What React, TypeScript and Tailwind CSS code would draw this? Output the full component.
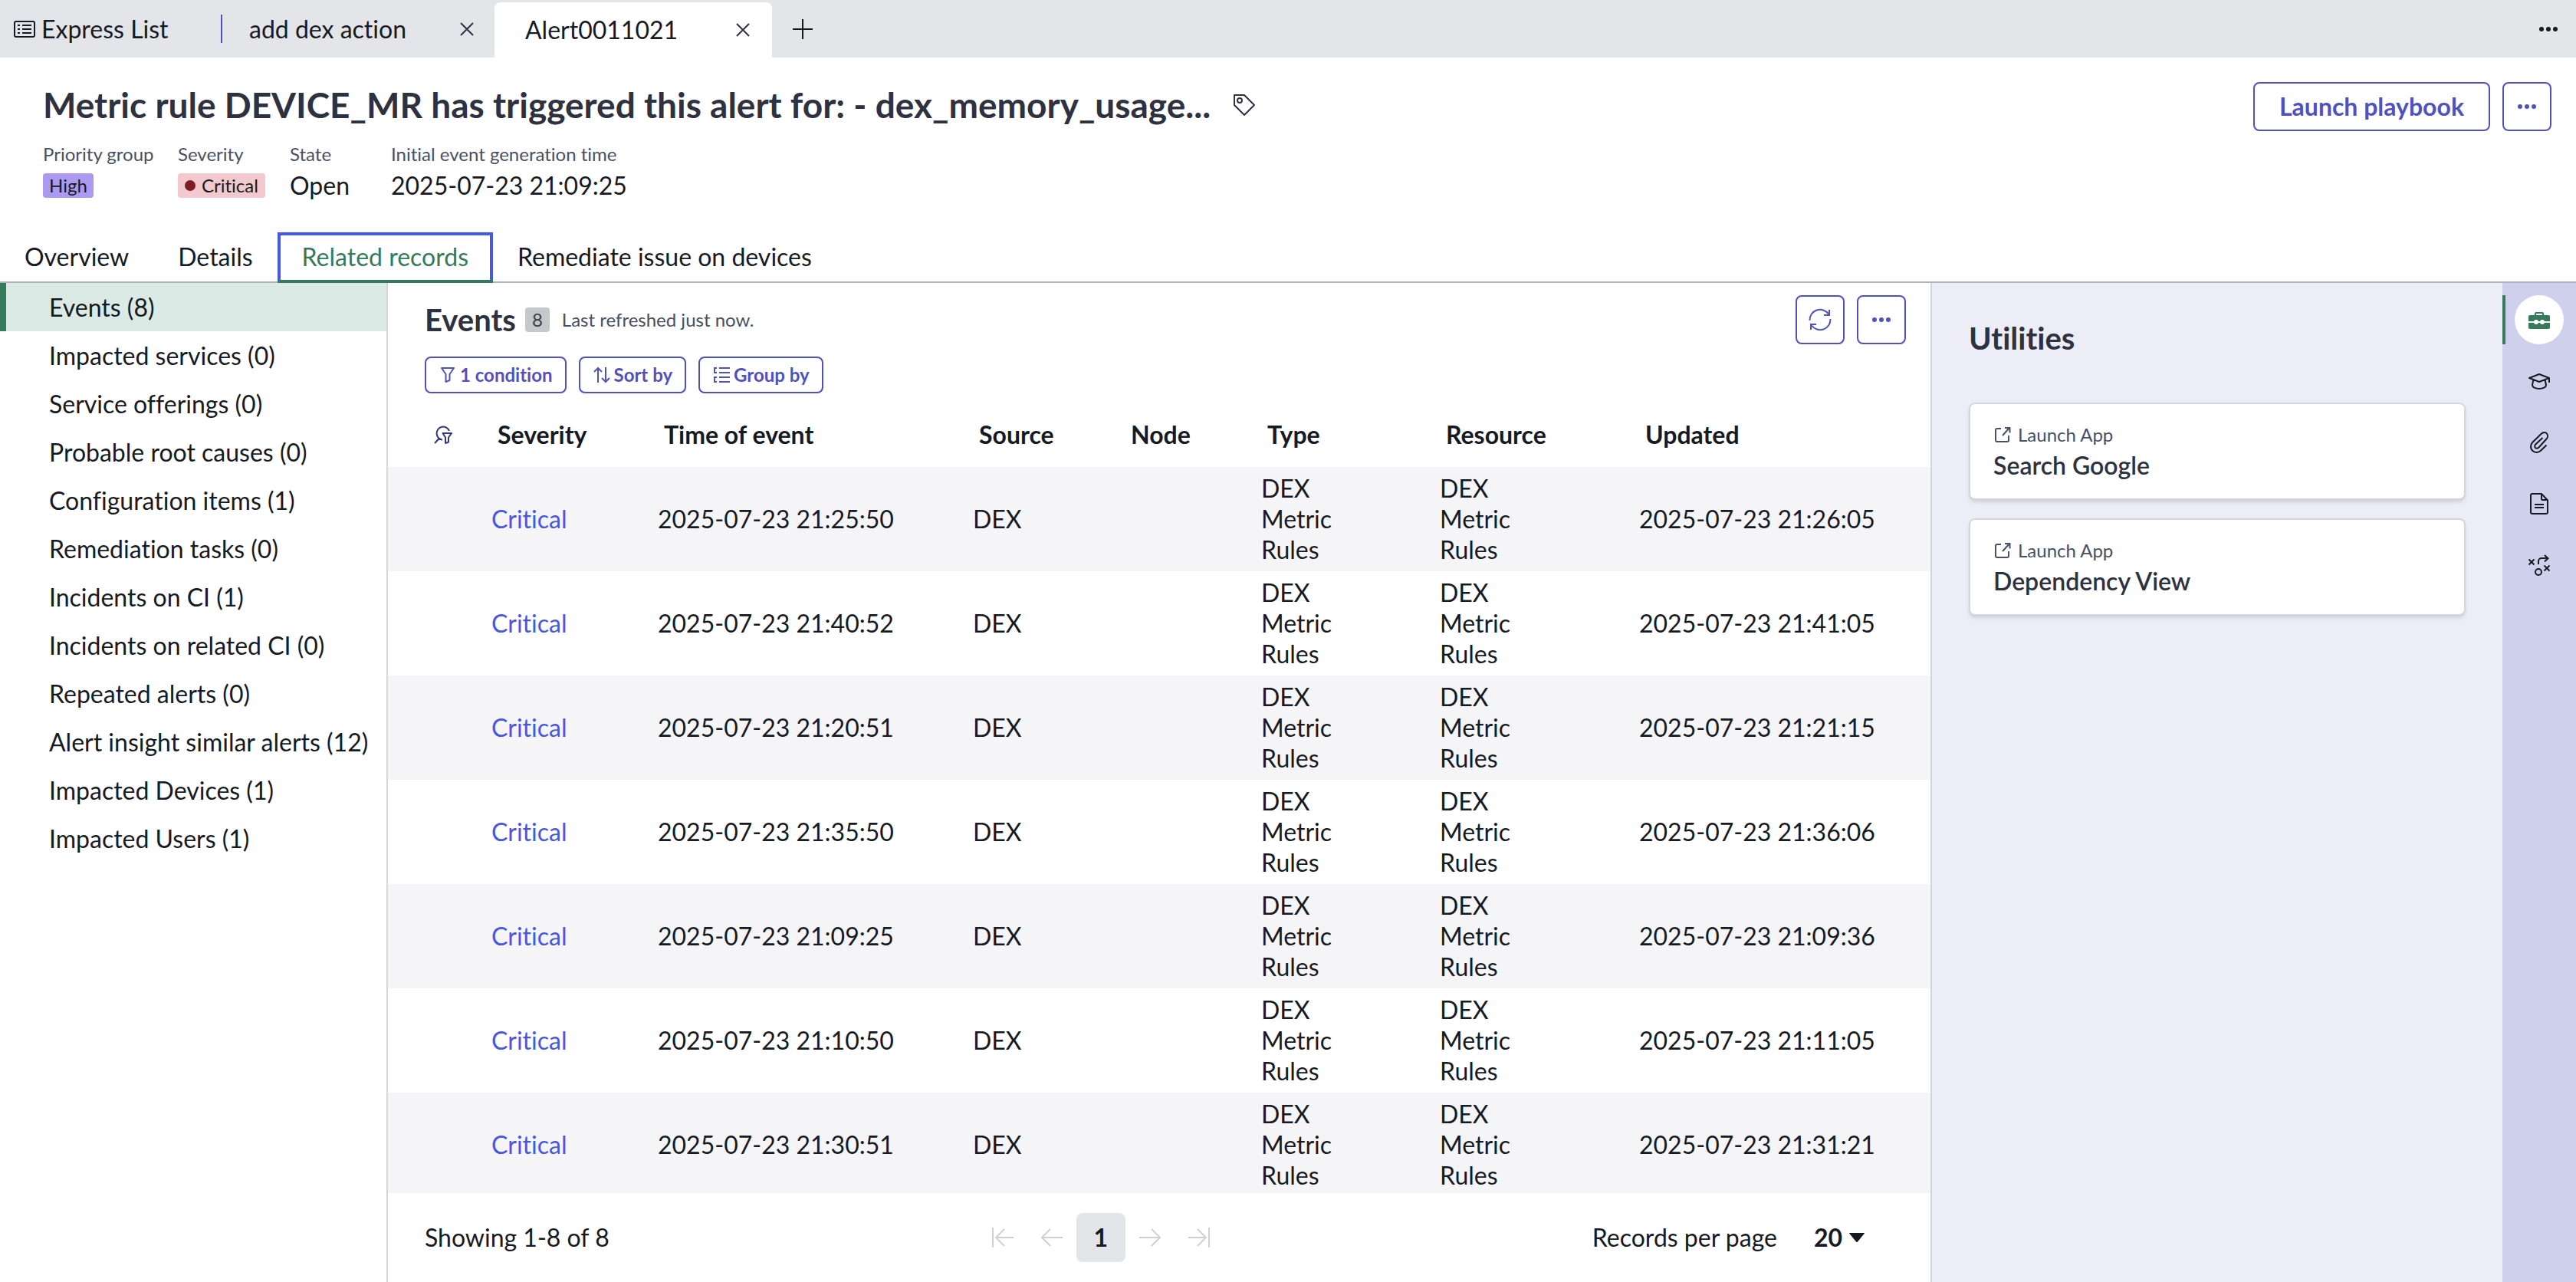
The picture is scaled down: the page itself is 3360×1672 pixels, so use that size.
import React from "react";

type IconProps = { className?: string; children?: React.ReactNode; box?: string; sw?: number };

function Svg({ className = "size-8", children, box = "0 0 32 32", sw = 2 }: IconProps) {
  return (
    <svg className={"shrink-0 " + className} viewBox={box} fill="none" stroke="currentColor" strokeWidth={sw} aria-hidden="true">
      {children}
    </svg>
  );
}

const Dots = () => (
  <Svg>
    <g fill="currentColor" stroke="none">
      <circle cx="7" cy="16" r="3" />
      <circle cx="16" cy="16" r="3" />
      <circle cx="25" cy="16" r="3" />
    </g>
  </Svg>
);

const Close = () => (
  <Svg>
    <path d="M8 8l16 16M24 8L8 24" />
  </Svg>
);

const ListIcon = () => (
  <Svg className="size-7" box="0 0 28 28">
    <rect x="1" y="4" width="26" height="20" rx="2" />
    <path d="M5 9h3M5 14h3M5 19h3M11 9h12M11 14h12M11 19h12" />
  </Svg>
);

const TagIcon = () => (
  <Svg>
    <path d="M3 3h13l13 13L16 29 3 16z" strokeLinejoin="round" />
    <circle cx="10" cy="10" r="3" />
  </Svg>
);

const LaunchIcon = () => (
  <Svg className="size-6" box="0 0 24 24">
    <path d="M10 4H5a2 2 0 0 0-2 2v13a2 2 0 0 0 2 2h13a2 2 0 0 0 2-2v-6M15 3h6.500v6.500M21 3l-9 10" />
  </Svg>
);

const sideItems = [
  "Events (8)",
  "Impacted services (0)",
  "Service offerings (0)",
  "Probable root causes (0)",
  "Configuration items (1)",
  "Remediation tasks (0)",
  "Incidents on CI (1)",
  "Incidents on related CI (0)",
  "Repeated alerts (0)",
  "Alert insight similar alerts (12)",
  "Impacted Devices (1)",
  "Impacted Users (1)",
];

const rows = [
  ["2025-07-23 21:25:50", "2025-07-23 21:26:05"],
  ["2025-07-23 21:40:52", "2025-07-23 21:41:05"],
  ["2025-07-23 21:20:51", "2025-07-23 21:21:15"],
  ["2025-07-23 21:35:50", "2025-07-23 21:36:06"],
  ["2025-07-23 21:09:25", "2025-07-23 21:09:36"],
  ["2025-07-23 21:10:50", "2025-07-23 21:11:05"],
  ["2025-07-23 21:30:51", "2025-07-23 21:31:21"],
];

function TopBar() {
  return (
    <div className="flex h-[75px] shrink-0 items-stretch bg-[#e4e5e9]">
      <button className="flex w-72 items-center gap-2 pl-[18px]">
        <ListIcon />
        <span>Express List</span>
      </button>
      <div className="my-[19px] w-[2px] bg-[#4f52bd]" />
      <div className="flex w-[355px] items-center justify-between pr-5 pl-[35px]">
        <button>add dex action</button>
        <button aria-label="Close add dex action" className="text-[#2e3240]"><Close /></button>
      </div>
      <div className="mt-[3px] flex w-[362px] items-center justify-between rounded-t-lg bg-white pr-[22px] pl-10">
        <button>Alert0011021</button>
        <button aria-label="Close Alert0011021" className="text-[#2e3240]"><Close /></button>
      </div>
      <button aria-label="Add tab" className="ml-6">
        <Svg><path d="M3 16h26M16 3v26" /></Svg>
      </button>
      <button aria-label="More tabs" className="mr-5 ml-auto"><Dots /></button>
    </div>
  );
}

function Field({ label, children, className }: { label: string; children: React.ReactNode; className: string }) {
  return (
    <div className={className}>
      <dt className="text-2xl whitespace-nowrap text-[#485063]">{label}</dt>
      <dd className="flex h-[50px] items-center">{children}</dd>
    </div>
  );
}

function Header() {
  return (
    <header className="flex shrink-0 items-start justify-between pt-8 pr-8 pl-14">
      <div>
        <div className="flex h-[60px] items-center gap-7">
          <h1 className="text-[46px] font-bold text-[#2e3240]">
            Metric rule DEVICE_MR has triggered this alert for: - dex_memory_usage...
          </h1>
          <button aria-label="Tags" className="text-[#2e3240]"><TagIcon /></button>
        </div>
        <dl className="mt-[18px] flex gap-8">
          <Field label="Priority group" className="w-36">
            <span className="rounded bg-[#ab9af0] px-2 text-2xl">High</span>
          </Field>
          <Field label="Severity" className="w-[114px]">
            <span className="flex items-center gap-2 rounded bg-[#f1c9ce] px-[9px] text-2xl">
              <span className="size-3.5 rounded-full bg-[#7d1d26]" />
              Critical
            </span>
          </Field>
          <Field label="State" className="w-[100px]">Open</Field>
          <Field label="Initial event generation time" className="w-80">2025-07-23 21:09:25</Field>
        </dl>
      </div>
      <div className="flex gap-4 text-[#4f52bd]">
        <button className="h-16 rounded-lg border-2 border-current px-8 text-[32px] font-bold">Launch playbook</button>
        <button aria-label="More actions" className="flex size-16 items-center justify-center rounded-lg border-2 border-current">
          <Dots />
        </button>
      </div>
    </header>
  );
}

function Tabs() {
  return (
    <nav className="mt-auto flex h-[66px] shrink-0 border-b-2 border-[#b0b1c1]">
      <button className="px-8">Overview</button>
      <button className="px-8">Details</button>
      <button className="relative -mb-0.5 border-4 border-[#4558e4] px-7 pb-0.5 text-[#357a5a] after:absolute after:inset-x-[-4px] after:-bottom-1 after:h-1 after:bg-[#357a5a]">
        Related records
      </button>
      <button className="px-8">Remediate issue on devices</button>
    </nav>
  );
}

function Sidebar() {
  return (
    <ul className="w-[506px] shrink-0 border-r-2 border-[#d3d4dc]">
      {sideItems.map((t, i) => (
        <li key={t}>
          <button
            className={
              i === 0
                ? "h-[63px] w-full border-l-8 border-[#357a5a] bg-[#dbeae4] pl-14 text-left"
                : "h-[63px] w-full pl-16 text-left"
            }
          >
            {t}
          </button>
        </li>
      ))}
    </ul>
  );
}

const chip = "flex h-12 items-center gap-1 rounded-lg border-2 border-current px-4 text-2xl font-bold";

function Records() {
  return (
    <main className="flex min-w-0 flex-1 flex-col">
      <div className="flex items-center pt-4 pr-8 pl-12">
        <h2 className="text-[40px] leading-[48px] font-bold text-[#2e3240]">Events</h2>
        <span className="ml-3 rounded bg-[#c5c9c9] px-[9px] text-2xl text-[#3c3f48]">8</span>
        <span className="ml-4 text-2xl text-[#485063]">Last refreshed just now.</span>
        <div className="ml-auto flex gap-4 text-[#4f52bd]">
          <button aria-label="Refresh" className="flex size-16 items-center justify-center rounded-lg border-2 border-current">
            <Svg>
              <path d="M2.500 17A13.500 13.500 0 0 1 27 8.500M29.500 15A13.500 13.500 0 0 1 5 23.500M28 3v7h-7M4 29v-7h7" />
            </Svg>
          </button>
          <button aria-label="More list actions" className="flex size-16 items-center justify-center rounded-lg border-2 border-current">
            <Dots />
          </button>
        </div>
      </div>
      <div className="mt-4 flex gap-4 pl-12 text-[#4f52bd]">
        <button className={chip}>
          <Svg className="size-6" box="0 0 24 24"><path d="M4 3h16l-5.500 8v8l-5 2V11z" strokeLinejoin="round" /></Svg>
          1 condition
        </button>
        <button className={chip}>
          <Svg className="size-6" box="0 0 24 24"><path d="M7 22V3M2 8l5-5 5 5M17 2v19M12 16l5 5 5-5" /></Svg>
          Sort by
        </button>
        <button className={chip}>
          <Svg className="size-6" box="0 0 24 24"><path d="M9 3h14M9 9h14M9 15h14M9 21h14M6 3H3v6h3M6 15H3v6h3" /></Svg>
          Group by
        </button>
      </div>
      <div className="mt-3 h-0 min-h-0 flex-1 overflow-hidden">
        <table className="w-full table-fixed border-collapse text-left">
          <colgroup>
            <col className="w-[127px]" />
            <col className="w-[217px]" />
            <col className="w-[411px]" />
            <col className="w-[198px]" />
            <col className="w-[178px]" />
            <col className="w-[233px]" />
            <col className="w-[260px]" />
            <col />
          </colgroup>
          <thead>
            <tr className="h-[84px] align-middle">
              <th className="pl-[58px] text-[#33367c]">
                <button aria-label="Search columns" className="flex">
                  <Svg className="size-7" box="0 0 28 28">
                    <path d="M22 9A8.500 8.500 0 1 0 13 20.500M8.500 19L3 25M13.500 12h11.500l-4 5.500v6l-4 1.500v-7.500z" strokeLinejoin="round" />
                  </Svg>
                </button>
              </th>
              {["Severity", "Time of event", "Source", "Node", "Type", "Resource", "Updated"].map((h) => (
                <th key={h} scope="col" className="pl-4 font-bold">{h}</th>
              ))}
            </tr>
          </thead>
          <tbody>
            {rows.map(([time, updated]) => (
              <tr key={time} className="h-[136px] odd:bg-[#f5f5f8]">
                <td />
                <td className="pl-2"><a href="#record" className="text-[#4558e4]">Critical</a></td>
                <td className="pl-2">{time}</td>
                <td className="pl-2">DEX</td>
                <td />
                <td className="pr-28 pl-2">DEX Metric Rules</td>
                <td className="pr-32 pl-2">DEX Metric Rules</td>
                <td className="pl-2">{updated}</td>
              </tr>
            ))}
          </tbody>
        </table>
      </div>
      <Footer />
    </main>
  );
}

const pager = "flex size-16 items-center justify-center rounded-lg";

function Footer() {
  return (
    <div className="flex h-[116px] shrink-0 items-center justify-between pr-[86px] pl-12">
      <span>Showing 1-8 of 8</span>
      <div className="flex text-[#cfd0d6]">
        <button disabled aria-label="First page" className={pager}>
          <Svg><path d="M3 3v26M30 16H7M18 5L7 16l11 11" /></Svg>
        </button>
        <button disabled aria-label="Previous page" className={pager}>
          <Svg><path d="M30 16H3M14 5L3 16l11 11" /></Svg>
        </button>
        <button aria-current="page" className="size-16 rounded-lg bg-[#e4e5e9] font-bold text-[#161a23]">1</button>
        <button disabled aria-label="Next page" className={pager}>
          <Svg><path d="M2 16h27M18 5l11 11-11 11" /></Svg>
        </button>
        <button disabled aria-label="Last page" className={pager}>
          <Svg><path d="M29 3v26M2 16h23M14 5l11 11-11 11" /></Svg>
        </button>
      </div>
      <div className="flex items-center">
        <label htmlFor="per-page">Records per page</label>
        <span className="ml-12 flex items-center gap-2">
          <select id="per-page" className="appearance-none bg-transparent font-bold">
            <option>20</option>
          </select>
          <Svg className="h-3 w-5" box="0 0 20 12"><path d="M1 0h18l-9 11z" fill="currentColor" strokeLinejoin="round" /></Svg>
        </span>
      </div>
    </div>
  );
}

function Utilities() {
  return (
    <aside className="w-[746px] shrink-0 border-l-2 border-[#d3d4dc] bg-[#ededf8] px-12 pt-12">
      <h2 className="text-[40px] leading-[48px] font-bold text-[#2e3240]">Utilities</h2>
      <div className="mt-[60px] flex flex-col gap-6">
        {["Search Google", "Dependency View"].map((t) => (
          <button key={t} className="h-[127px] rounded-lg border-2 border-[#d5d6dc] bg-white px-[30px] text-left text-[#2e3240] shadow-md">
            <span className="flex items-center gap-2 text-2xl text-[#485063]">
              <LaunchIcon />
              Launch App
            </span>
            <span className="mt-1 block font-semibold">{t}</span>
          </button>
        ))}
      </div>
    </aside>
  );
}

const railBtn = "flex size-16 items-center justify-center";

function Rail() {
  return (
    <div className="flex w-24 shrink-0 flex-col items-center gap-4 bg-[#cfd0ec] pt-4">
      <div className="flex w-full border-l-4 border-[#357a5a] pl-3">
        <button aria-label="Utilities" className="flex size-16 items-center justify-center rounded-full bg-white text-[#357a5a]">
          <Svg>
            <path d="M11 11V8a1 1 0 0 1 1-1h8a1 1 0 0 1 1 1v3" />
            <rect x="2" y="10" width="28" height="18" rx="2" fill="currentColor" stroke="none" />
            <path d="M2 19h28" stroke="white" />
            <g fill="white" stroke="none">
              <circle cx="12" cy="19" r="3" />
              <circle cx="20" cy="19" r="3" />
            </g>
          </Svg>
        </button>
      </div>
      <button aria-label="Learn" className={railBtn}>
        <Svg><path d="M3 12l13-5 13 5-13 5zM29 12v6M8.500 14L7 21c0 3 4 5 9 5s9-2 9-5l-1.500-7" strokeLinejoin="round" /></Svg>
      </button>
      <button aria-label="Attachments" className={railBtn}>
        <Svg><path d="M25.500 19.500L18 26.800c-3.500 3.200-8 2.700-10.800 0s-3-7.500 0-10.800L18.500 5c2.500-2.500 6-2.500 7.500-.500s1.500 5-.500 7L15.500 22.500c-1.500 1.500-3.500 1.500-4.500.500s-1.200-3 .300-4.500L20.500 10" /></Svg>
      </button>
      <button aria-label="Notes" className={railBtn}>
        <Svg><path d="M7 3h12l8 8.500V27a2 2 0 0 1-2 2H7a2 2 0 0 1-2-2V5a2 2 0 0 1 2-2zM19 3v6.500a1.500 1.500 0 0 0 1.500 1.500H27M10 17h12M10 21h12" /></Svg>
      </button>
      <button aria-label="Playbook" className={railBtn}>
        <Svg><path d="M2.500 8.500l7 7M9.500 8.500l-7 7M22.500 16.500l7 7M29.500 16.500l-7 7M15 15v-4a4 4 0 0 1 4-4h8M23 3l4.500 4.300L23 11.500" /><circle cx="15" cy="25" r="4" /></Svg>
      </button>
    </div>
  );
}

export default function App() {
  return (
    <div className="flex h-screen min-h-0 flex-col overflow-hidden bg-white font-['Lato',sans-serif] text-[32px] leading-10 text-[#161a23] [font-variant-ligatures:none]">
      <TopBar />
      <div className="flex h-[294px] shrink-0 flex-col">
        <Header />
        <Tabs />
      </div>
      <div className="flex min-h-0 flex-1">
        <Sidebar />
        <Records />
        <Utilities />
        <Rail />
      </div>
    </div>
  );
}
